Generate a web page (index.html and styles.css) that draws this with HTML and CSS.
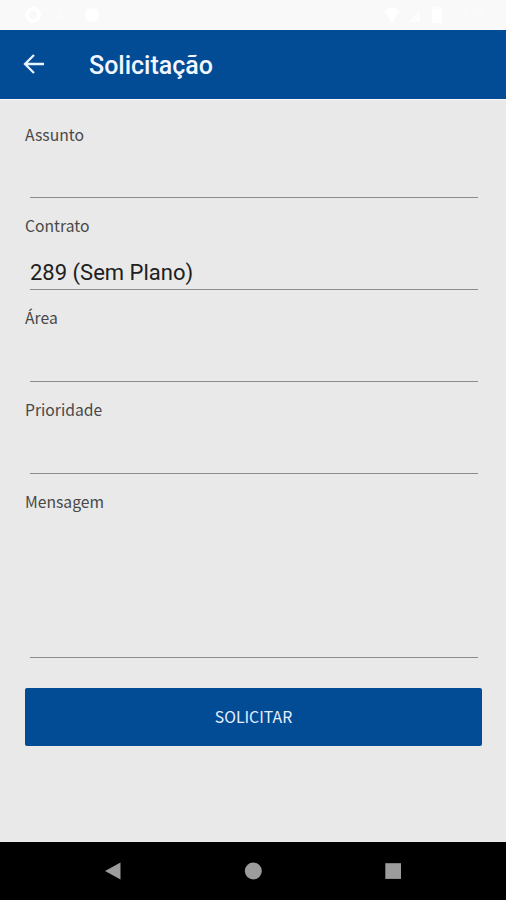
FILE: index.html
```html
<!DOCTYPE html>
<html lang="pt-BR">

<head>
    <meta charset="UTF-8">
    <meta name="viewport" content="width=device-width, initial-scale=1.0">
    <title>Solicitação</title>
    <link rel="stylesheet" href="styles.css">
</head>

<body>
    <div class="statusBar">
        <svg width="80" height="18" viewBox="0 0 80 18" fill="none" stroke="#fff">
            <circle cx="9" cy="9" r="6" stroke-width="4" />
            <path d="M37 3v10M33 9l4 4 4-4" stroke-width="2" opacity=".4" />
            <rect x="62" y="3" width="12" height="12" rx="2" fill="#fff" />
        </svg>
        <svg width="106" height="18" viewBox="0 0 106 18" fill="#fff">
            <path d="M2 4Q10 -1 18 4L10 17z" />
            <path d="M26 16L38 4v12z" opacity=".6" />
            <path d="M50 3h3V1h4v2h3v14H50z" />
            <path d="M73 5h2v8h-2zM83 5h2v8h-2zM100 4v9h-2V9h-5z" opacity=".3" />
        </svg>
    </div>

    <header class="toolbar">
        <svg class="back" width="22" height="22" viewBox="0 0 22 22">
            <path d="M21 11H2M11 2L2 11L11 20" fill="none" stroke="#e9f2ff" stroke-width="2.3" />
        </svg>
        <h1>Solicitação</h1>
    </header>

    <form class="content">
        <div class="field">
            <label for="assunto">Assunto</label>
            <input type="text" id="assunto">
        </div>
        <div class="field">
            <label for="contrato">Contrato</label>
            <input type="text" id="contrato" value="289 (Sem Plano)">
        </div>
        <div class="field">
            <label for="area">Área</label>
            <input type="text" id="area">
        </div>
        <div class="field">
            <label for="prioridade">Prioridade</label>
            <input type="text" id="prioridade">
        </div>
        <div class="field message">
            <label for="mensagem">Mensagem</label>
            <textarea id="mensagem"></textarea>
        </div>
        <button type="button">SOLICITAR</button>
    </form>

    <nav class="navBar">
        <svg width="18" height="18" viewBox="0 0 18 18"><path d="M1 9L16.5 .5v17z" /></svg>
        <svg width="18" height="18" viewBox="0 0 18 18"><circle cx="9.3" cy="9" r="8.5" /></svg>
        <svg width="18" height="18" viewBox="0 0 18 18"><rect x="1.3" y="1.2" width="15.7" height="15.7" /></svg>
    </nav>
</body>

</html>
```
FILE: styles.css
```css
body {
    font-family: Roboto, sans-serif;
    background-color: #e9e9e9;
    margin: 0;
    display: flex;
    flex-direction: column;
    height: 100vh;
}

.statusBar {
    background-color: #f9f9f9;
    height: 30px;
    padding: 6px 18px 0 24px;
    box-sizing: border-box;
    display: flex;
    justify-content: space-between;
}

.toolbar {
    background-color: #024b95;
    height: 69px;
    display: flex;
    align-items: center;
    padding-left: 23px;
    border-bottom: 1px solid #f8f8fc;
}

.back {
    margin: 0 44px 1px 0;
}

h1 {
    color: #f2f6ff;
    font-size: 25px;
    font-weight: 500;
    margin: 2px 0 0;
}

.content {
    flex: 1;
    padding: 24px 24px 0 25px;
}

.field {
    height: 92px;
}

label {
    display: block;
    height: 22px;
    line-height: 20px;
    font-family: "Noto Sans CJK SC", sans-serif;
    font-size: 15.7px;
    color: #484848;
}

.field:first-child label {
    line-height: 22px;
}

input,
textarea {
    display: block;
    width: 448px;
    height: 52px;
    margin: 0 5px;
    padding: 18px 0 0;
    box-sizing: border-box;
    background: none;
    border: none;
    border-bottom: 1px solid #8c8c8c;
    border-radius: 0;
    outline: none;
    resize: none;
    font-family: Roboto, sans-serif;
    font-size: 22px;
    color: #202020;
}

.message {
    height: 196px;
}

textarea {
    height: 144px;
}

button {
    display: block;
    width: 457px;
    height: 58px;
    padding: 0 0 2px;
    background-color: #024b95;
    color: #e6efff;
    border: none;
    border-radius: 2px;
    font-family: "Noto Sans CJK SC", sans-serif;
    font-size: 15.8px;
}

.navBar {
    background-color: #000;
    height: 58px;
    display: flex;
    justify-content: center;
    align-items: center;
    gap: 122px;
    fill: #9c9c9c;
}
```
